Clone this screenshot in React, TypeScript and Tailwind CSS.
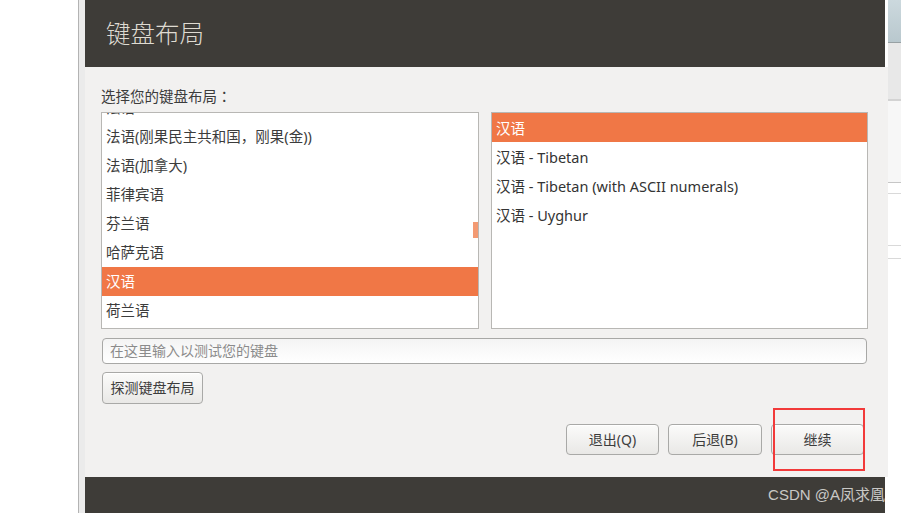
import React from 'react';

const leftItems = [
  '法语',
  '法语(刚果民主共和国，刚果(金))',
  '法语(加拿大)',
  '菲律宾语',
  '芬兰语',
  '哈萨克语',
  '汉语',
  '荷兰语',
];

const rightItems = ['汉语', '汉语 - Tibetan', '汉语 - Tibetan (with ASCII numerals)', '汉语 - Uyghur'];

function Btn({ label, className }: { label: string; className: string }) {
  return (
    <div
      className={
        'flex items-center justify-center rounded-[4px] border border-[#a9a9a7] bg-gradient-to-b from-[#fbfbfa] to-[#e9e8e6] text-[14px] leading-[20px] text-[#3c3c3c] shadow-[inset_0_1px_0_#ffffff] ' +
        className
      }
    >
      {label}
    </div>
  );
}

export default function App() {
  return (
    <div className="flex h-[513px] w-[901px] overflow-hidden bg-white font-['Noto_Sans','Noto_Sans_CJK_SC',sans-serif]">
      {/* blank area on the left */}
      <div className="w-[78px] shrink-0 bg-white" />
      <div className="w-[1px] shrink-0 bg-[#b3b3b3]" />
      <div className="w-[6px] shrink-0 bg-[#ebebeb]" />

      {/* installer window */}
      <div className="flex w-[803px] shrink-0 flex-col">
        <div className="flex h-[67px] w-[800px] items-center bg-[#3e3c38] pl-[21px] font-['Noto_Sans_CJK_SC',sans-serif] text-[24.5px] font-light text-[#dfdbd2]">
          键盘布局
        </div>

        <div className="relative flex h-[410px] w-[803px] flex-col bg-[#f2f1f0] pt-[19px]">
          <div className="h-[20px] pl-[16px] font-['Noto_Sans_CJK_TC',sans-serif] text-[14.5px] leading-[20px] text-[#3c3c3c]">
            选择您的键盘布局：
          </div>

          <div className="mt-[6px] flex h-[217px] gap-[12px] pl-[16px]">
            <div className="relative w-[378px] overflow-hidden border border-[#b8b7b4] bg-white">
              <div className="-mt-[20px]">
                {leftItems.map((it) => (
                  <div
                    key={it}
                    className={
                      'h-[29px] pl-[4px] text-[14.5px] leading-[29px] ' +
                      (it === '汉语' ? 'bg-[#f07746] text-white' : 'text-[#3c3c3c]')
                    }
                  >
                    {it}
                  </div>
                ))}
              </div>
              <div className="absolute right-0 top-[109px] h-[16px] w-[5px] bg-[#f39a73]" />
            </div>

            <div className="w-[377px] overflow-hidden border border-[#b8b7b4] bg-white">
              {rightItems.map((it, i) => (
                <div
                  key={it}
                  className={
                    'h-[29px] pl-[4px] text-[14.5px] leading-[30px] ' +
                    (i === 0 ? 'bg-[#f07746] text-white' : 'text-[#333333]')
                  }
                >
                  {it}
                </div>
              ))}
            </div>
          </div>

          <div className="ml-[17px] mt-[9px] flex h-[26px] w-[765px] items-center rounded-[4px] border border-[#a8a8a6] bg-gradient-to-b from-[#f4f4f4] to-white pl-[7px] text-[14px] leading-[20px] text-[#8b8b8b]">
            在这里输入以测试您的键盘
          </div>

          <Btn label="探测键盘布局" className="ml-[17px] mt-[8px] h-[32px] w-[101px]" />

          <div className="mt-[20px] flex h-[31px] gap-[9px] pl-[481px]">
            <Btn label="退出(Q)" className="h-[31px] w-[93px]" />
            <Btn label="后退(B)" className="h-[31px] w-[94px]" />
            <Btn label="继续" className="h-[31px] w-[93px]" />
          </div>

          {/* red annotation box */}
          <div className="absolute left-[688px] top-[341px] h-[63px] w-[92px] border-2 border-[#f23a3a]" />
        </div>

        <div className="flex h-[36px] w-[800px] items-center justify-end overflow-hidden bg-[#3e3c38] font-['Liberation_Sans','Noto_Sans_CJK_SC',sans-serif] text-[15px] text-[#c9c8c5] whitespace-nowrap">
          CSDN @A凤求凰
        </div>
      </div>

      {/* neighbouring window sliver */}
      <div className="flex w-[13px] shrink-0 flex-col">
        <div className="h-[42px] bg-gradient-to-b from-[#ccd9de] to-[#b9c8ce]" />
        <div className="h-[1px] bg-[#98a1a4]" />
        <div className="h-[56px] bg-[#e8e8e8]" />
        <div className="h-[2px] bg-[#d3d3d3]" />
        <div className="h-[81px] bg-[#f7f7f7]" />
        <div className="h-[1px] bg-[#c6c6c6]" />
        <div className="h-[10px] bg-white" />
        <div className="h-[1px] bg-[#d9d9d9]" />
        <div className="h-[51px] bg-white" />
        <div className="h-[1px] bg-[#d9d9d9]" />
        <div className="h-[12px] bg-white" />
        <div className="h-[1px] bg-[#d9d9d9]" />
        <div className="flex-1 bg-white" />
      </div>
    </div>
  );
}
